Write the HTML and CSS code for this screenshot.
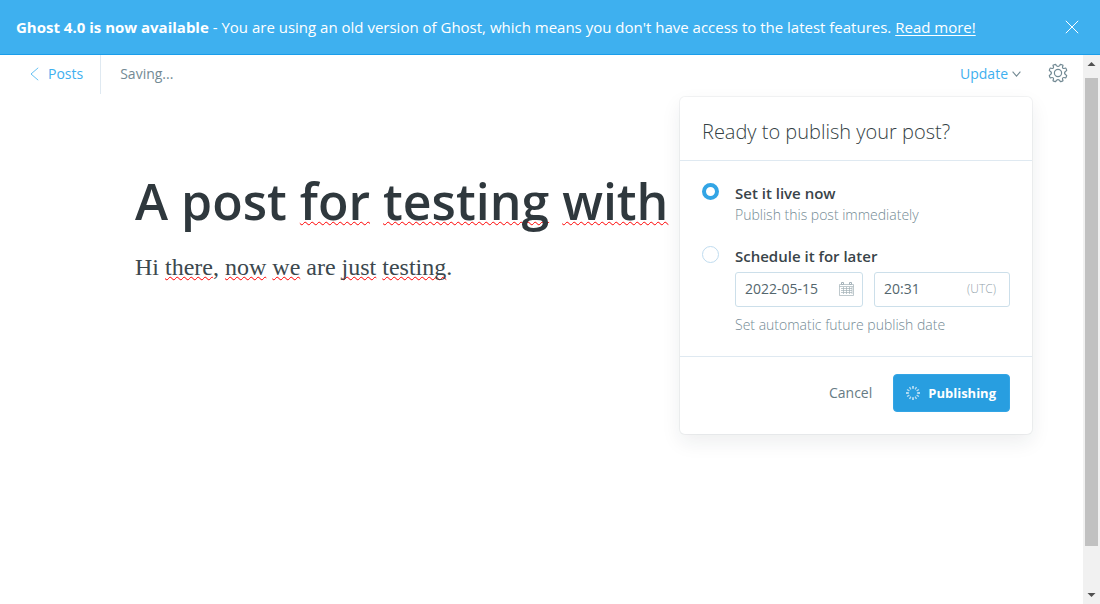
FILE: index.html
```html
<!DOCTYPE html>
<html lang="en">
<head>
<meta charset="utf-8">
<meta name="viewport" content="width=device-width, initial-scale=1">
<title>Editor - Ghost</title>
<link rel="stylesheet" href="styles.css">
</head>
<body>
<aside class="banner">
  <p class="banner-text"><strong>Ghost 4.0 is now available</strong> - You are using an old version of Ghost, which means you don't have access to the latest features. <a href="#">Read more!</a></p>
  <button class="banner-close" type="button" aria-label="Close">
    <svg width="14" height="14" viewBox="0 0 14 14" fill="none" stroke="currentColor"><path d="M.8.8l12.4 12.4M13.2.8.8 13.2"/></svg>
  </button>
</aside>
<div class="viewport">
  <main class="editor">
    <header class="toolbar">
      <a class="back" href="#">
        <svg width="9" height="14" viewBox="0 0 9 14" fill="none" stroke="currentColor"><path d="M8.2.8 1 7l7.2 6.2" stroke-width=".8"/></svg>
        Posts
      </a>
      <span class="status">Saving...</span>
      <div class="publish-menu">
        <button class="update" type="button" aria-expanded="true">
          Update
          <svg width="9" height="6" viewBox="0 0 9 6" fill="none" stroke="#738a94" stroke-width="1.1"><path d="M.6.7l3.9 4.4L8.4.7"/></svg>
        </button>
        <form class="popover">
          <h2 class="popover-title">Ready to publish your post?</h2>
          <div class="options">
            <div class="option">
              <input class="radio" type="radio" name="when" id="now" checked>
              <div class="option-body">
                <label class="option-label" for="now">Set it live now</label>
                <p class="hint">Publish this post immediately</p>
              </div>
            </div>
            <div class="option">
              <input class="radio" type="radio" name="when" id="later">
              <div class="option-body">
                <label class="option-label" for="later">Schedule it for later</label>
                <div class="fields">
                  <div class="field date-field">
                    <input type="text" value="2022-05-15" aria-label="Publish date">
                    <svg width="15" height="14" viewBox="0 0 15 14" fill="none" stroke="#a3b1b8"><path d="M.5 2.5h14v11H.5zM.5 4.5h14M2 6.5h11M2 8.5h11M2 10.5h11M4.5 5v7M7.5 5v7M10.5 5v7M13 5v7" stroke-width=".7"/><path d="M2.5.5h2v2h-2zM10.5.5h2v2h-2z" fill="#fff"/></svg>
                  </div>
                  <div class="field time-field">
                    <input type="text" value="20:31" aria-label="Publish time in UTC">
                    <span class="zone">(UTC)</span>
                  </div>
                </div>
                <p class="hint">Set automatic future publish date</p>
              </div>
            </div>
          </div>
          <footer class="actions">
            <button class="cancel" type="button">Cancel</button>
            <button class="submit" type="submit">
              <svg width="14" height="14" viewBox="-7 -7 14 14" stroke="#fff" stroke-width="1.4"><path d="M0-4.2V-7M0 4.2V7M-4.2 0H-7M4.2 0H7" opacity=".85"/><path d="M2.1-3.6 3.5-6M3.6-2.1 6-3.5M3.6 2.1 6 3.5M2.1 3.6 3.5 6M-2.1 3.6-3.5 6M-3.6 2.1-6 3.5M-3.6-2.1-6-3.5M-2.1-3.6-3.5-6" opacity=".65"/></svg>
              Publishing
            </button>
          </footer>
        </form>
      </div>
      <button class="settings" type="button" aria-label="Settings">
        <svg width="20" height="20" viewBox="-10 -10 20 20" fill="none" stroke="currentColor" stroke-width="1.200" stroke-linejoin="round"><circle r="3.600"/><path d="M-1.600-7.400Q0-5.800 1.600-7.400L2.400-8.700Q4-8.400 5-7.700L4.500-6Q4.400-4.400 6-4.500L7.700-5Q8.500-4 8.700-2.400L7.400-1.600Q5.800 0 7.400 1.600L8.700 2.400Q8.500 4 7.700 5L6 4.500Q4.400 4.400 4.500 6L5 7.700Q4 8.500 2.400 8.700L1.600 7.400Q0 5.800-1.600 7.400L-2.400 8.700Q-4 8.500-5 7.700L-4.500 6Q-4.400 4.400-6 4.500L-7.700 5Q-8.500 4-8.700 2.400L-7.400 1.600Q-5.800 0-7.400-1.600L-8.700-2.400Q-8.500-4-7.700-5L-6-4.500Q-4.400-4.400-4.500-6L-5-7.700Q-4-8.500-2.400-8.700Z"/></svg>
      </button>
    </header>
    <article class="post">
      <h1 class="post-title">A post <span class="misspelt">for</span> <span class="misspelt">testing</span> <span class="misspelt">with</span></h1>
      <p class="post-body">Hi <span class="misspelt">there</span>, <span class="misspelt">now</span> <span class="misspelt">we</span> are <span class="misspelt">just</span> <span class="misspelt">testing</span>.</p>
    </article>
  </main>
  <div class="scrollbar" aria-hidden="true">
    <svg width="17" height="17" viewBox="0 0 17 17" fill="#505050"><path d="M4.500 11 8.500 7l4 4z"/></svg>
    <div class="track"><div class="thumb"></div></div>
    <svg width="17" height="17" viewBox="0 0 17 17" fill="#505050"><path d="M4.500 6h8l-4 4z"/></svg>
  </div>
</div>
</body>
</html>
```
FILE: styles.css
```css
* { box-sizing: border-box; }
body {
  margin: 0;
  height: 100vh;
  display: flex;
  flex-direction: column;
  overflow: hidden;
  background: #fff;
  color: #15171a;
  font: 14px/20px "Open Sans", "Noto Sans", sans-serif;
}
h1, h2, p { margin: 0; }
button {
  padding: 0;
  border: 0;
  background: none;
  font: inherit;
  color: inherit;
  cursor: pointer;
}
svg { display: block; flex: none; }

.banner {
  display: flex;
  align-items: center;
  justify-content: space-between;
  padding: 16px 21px 16px 16px;
  border-bottom: 1px solid #1a9dea;
  background: #3eb0ef;
  color: #fff;
}
.banner-text { font-size: 15px; line-height: 22px; }
.banner-text a { color: inherit; text-underline-offset: 2px; }

.viewport { flex: 1; min-height: 0; display: flex; }
.editor { flex: 1; min-width: 0; }

.toolbar { display: flex; align-items: center; height: 39px; padding-right: 15px; }
.back {
  display: flex;
  align-items: center;
  gap: 9px;
  align-self: stretch;
  padding: 0 17px 2px 30px;
  border-right: 1px solid #dfe9f1;
  color: #3eb0ef;
  text-decoration: none;
}
.status { padding: 0 19px 2px; color: #738a94; }
.publish-menu { position: relative; margin-left: auto; padding-right: 11px; }
.update {
  display: flex;
  align-items: center;
  gap: 4px;
  padding-bottom: 2px;
  color: #3eb0ef;
}
.settings { margin-left: 16px; padding-bottom: 3px; color: #738a94; }

.popover {
  position: absolute;
  top: 33px;
  right: 0;
  z-index: 1;
  width: 352px;
  border-radius: 5px;
  background: #fff;
  box-shadow: 0 0 0 1px rgba(99, 114, 130, .08), 0 8px 20px rgba(27, 39, 51, .08);
}
.popover-title {
  padding: 22px 22px 15px;
  border-bottom: 1px solid #dfe9f1;
  color: #343f44;
  font-size: 20px;
  line-height: 26px;
  font-weight: 300;
}
.options { display: grid; gap: 20px; padding: 21px 22px; }
.option { display: flex; gap: 16px; }
.option-body { flex: 1; }
.radio {
  appearance: none;
  flex: none;
  width: 17px;
  height: 17px;
  margin: 1px 0 0;
  border: 1px solid #c0dcef;
  border-radius: 50%;
  background: #fff;
}
.radio:checked { border: 4px solid #33a5e5; }
.option-label { display: block; font-size: 15px; line-height: 22px; font-weight: 600; color: #394449; }
.hint { color: #738a94; line-height: 21px; font-weight: 300; }
.fields { display: flex; gap: 11px; margin: 5px 0 7px; }
.field {
  display: flex;
  align-items: center;
  height: 35px;
  padding: 0 13px 0 9px;
  border: 1px solid #ccdfea;
  border-radius: 3px;
}
.date-field { flex: 0 0 128px; padding-right: 8px; }
.time-field { flex: 1; }
.field input {
  flex: 1;
  min-width: 0;
  width: 0;
  padding: 0;
  border: 0;
  outline: 0;
  background: none;
  color: #54666d;
  font: inherit;
}
.zone { color: #95a4ac; font-size: 12px; font-weight: 300; }
.actions {
  display: flex;
  justify-content: flex-end;
  align-items: center;
  gap: 21px;
  padding: 17px 22px 22px;
  border-top: 1px solid #dfe9f1;
}
.cancel { color: #667b84; }
.submit {
  display: flex;
  align-items: center;
  gap: 8px;
  height: 38px;
  padding: 0 13px 0 12px;
  border: 1px solid #33a5e5;
  border-radius: 4px;
  background: #289ee0;
  color: #fff;
  font-size: 13px;
  font-weight: 700;
}

.post { padding: 75px 135px; }
.post-title {
  color: #2f383d;
  font-size: 50px;
  line-height: 64px;
  font-weight: 600;
  white-space: nowrap;
}
.post-body {
  margin-top: 16px;
  color: #3c484e;
  font: 24px/36px "Liberation Serif", serif;
}
.misspelt {
  text-decoration: underline wavy #f00 1px;
  text-decoration-skip-ink: none;
  text-underline-offset: 1px;
}

.scrollbar { display: flex; flex-direction: column; width: 17px; background: #f1f1f1; }
.track { flex: 1; padding: 6px 2px 0; }
.thumb { height: 92%; background: #c1c1c1; }
```
